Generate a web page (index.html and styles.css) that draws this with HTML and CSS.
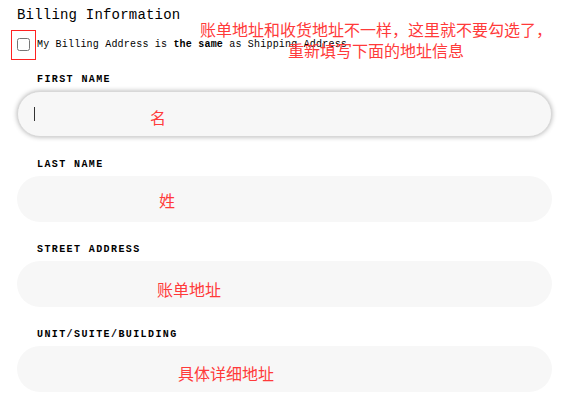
FILE: index.html
```html
<!DOCTYPE html>
<html lang="zh-CN">
<head>
    <meta charset="UTF-8">
    <meta name="viewport" content="width=device-width, initial-scale=1.0">
    <title>Billing Information</title>
    <link rel="stylesheet" href="styles.css">
</head>
<body>
    <main class="billing">
        <h2 class="billing-title">Billing Information</h2>

        <!-- same-as-shipping row -->
        <div class="same-row">
            <input type="checkbox" id="sameAddress" class="same-check">
            <label for="sameAddress" class="same-text">My Billing Address is <b>the same</b> as Shipping Address</label>
            <span class="mark-box"></span>
        </div>

        <p class="note">账单地址和收货地址不一样，这里就不要勾选了，<br>重新填写下面的地址信息</p>

        <div class="field field-first">
            <label for="firstName" class="field-label">First Name</label>
            <div class="field-box">
                <input type="text" id="firstName" class="field-input is-focused">
                <span class="caret"></span>
                <span class="hint hint-first">名</span>
            </div>
        </div>

        <div class="field">
            <label for="lastName" class="field-label">Last Name</label>
            <div class="field-box">
                <input type="text" id="lastName" class="field-input">
                <span class="hint hint-last">姓</span>
            </div>
        </div>

        <div class="field">
            <label for="street" class="field-label">Street Address</label>
            <div class="field-box">
                <input type="text" id="street" class="field-input">
                <span class="hint hint-street">账单地址</span>
            </div>
        </div>

        <div class="field">
            <label for="unit" class="field-label">Unit/Suite/Building</label>
            <div class="field-box">
                <input type="text" id="unit" class="field-input">
                <span class="hint hint-unit">具体详细地址</span>
            </div>
        </div>
    </main>
</body>
</html>
```

FILE: styles.css
```css
body {
    margin: 0;
    padding: 0;
    background: #fff;
    color: #000;
    font-family: "Liberation Mono", "DejaVu Sans Mono", monospace;
    overflow: hidden;
}
.billing {
    position: relative;
    padding: 0 14px 0 17px;
}
.billing-title {
    margin: 0;
    padding-top: 6px;
    height: 24px;
    font-size: 14px;
    font-weight: normal;
    line-height: 18px;
    letter-spacing: 0.2px;
}
.same-row {
    position: relative;
    display: flex;
    align-items: center;
    height: 28px;
}
.same-check {
    width: 13px;
    height: 13px;
    margin: 0 7px 0 0;
}
.same-text {
    font-size: 10px;
    letter-spacing: 0.2px;
}
/* red annotation frame round the checkbox */
.mark-box {
    position: absolute;
    left: -6px;
    top: 0;
    width: 23px;
    height: 28px;
    border: 1px solid #f22;
}
.note {
    position: absolute;
    left: 200px;
    top: 19px;
    width: 352px;
    margin: 0;
    text-align: center;
    font-family: "Noto Sans CJK SC", sans-serif;
    font-size: 16px;
    line-height: 21px;
    color: #ff3a3a;
}
.field {
    margin-top: 20px;
}
.field-first {
    margin-top: 14px;
}
.field-label {
    display: block;
    height: 12px;
    margin: 0 0 5px 20px;
    padding-top: 2px;
    font-size: 10px;
    font-weight: bold;
    line-height: 12px;
    letter-spacing: 1.4px;
    text-transform: uppercase;
}
.field-box {
    position: relative;
}
.field-input {
    display: block;
    box-sizing: border-box;
    width: 535px;
    height: 46px;
    margin: 0;
    padding: 0 18px;
    border: none;
    border-radius: 23px;
    background: #f7f7f7;
    outline: none;
}
.field-input.is-focused {
    border: 1px solid #d8d8d8;
    box-shadow: 0 0 5px rgba(0, 0, 0, 0.3);
}
.caret {
    position: absolute;
    left: 17px;
    top: 16px;
    width: 1px;
    height: 14px;
    background: #333;
}
.hint {
    position: absolute;
    font-family: "Noto Sans CJK SC", sans-serif;
    font-size: 16px;
    line-height: 16px;
    color: #ff3a3a;
}
.hint-first { left: 133px; top: 18px; }
.hint-last { left: 142px; top: 16px; }
.hint-street { left: 140px; top: 20px; }
.hint-unit { left: 161px; top: 19px; }
```
